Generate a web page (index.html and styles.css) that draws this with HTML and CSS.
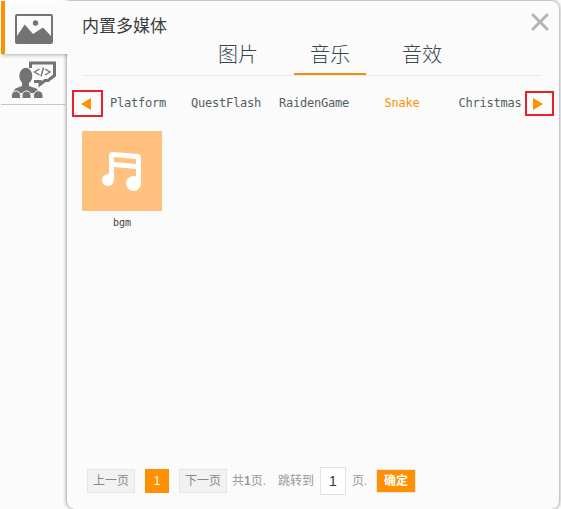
FILE: index.html
```html
<!DOCTYPE html>
<html lang="zh-CN">
<head>
<meta charset="utf-8">
<title>内置多媒体</title>
<link rel="stylesheet" href="styles.css">
</head>
<body>
<div class="app">
  <nav class="sidebar">
    <div class="side-item active">
      <svg width="38" height="30" viewBox="0 0 38 30"><rect x="1" y="1" width="36" height="28" rx="1" fill="none" stroke="#737373" stroke-width="2"/><circle cx="20.5" cy="9" r="2.7" fill="#737373"/><path d="M2 22L9.7 10.5L18 20L28 13.5L36 22V28H2Z" fill="#737373"/></svg>
    </div>
    <div class="side-item second">
      <svg width="46" height="38" viewBox="0 0 46 38" fill="#737373"><path d="M19.5 7V2H43.500V14.500L37 19.500H34L29 23.500V20.500H23" fill="none" stroke="#737373" stroke-width="3"/><ellipse cx="14.800" cy="15" rx="6.500" ry="8.200"/><path d="M11 21H18V25L25.500 27.500L29 32H1L4.500 27.500L11 25Z"/><path d="M.5 37.500V34.500A4.500 4.500 0 0 1 9.500 34.500V37.500ZM11 37.500V34.500A4.500 4.500 0 0 1 20 34.500V37.500ZM22.500 37.500V34.500A4.500 4.500 0 0 1 32 34.500V37.500Z" stroke="#fbfbfb" stroke-width="1"/><path d="M28.500 8L23.500 11L28.500 14M32.500 6.500L30 15.500M34 8L39 11L34 14" fill="none" stroke="#737373" stroke-width="1.400"/></svg>
    </div>
  </nav>
  <main class="panel">
    <header class="header">
      <h1 class="title">内置多媒体</h1>
      <svg class="close" width="18" height="18" viewBox="0 0 18 18"><path d="M2 2L16 16M16 2L2 16" stroke="#b3b5b5" stroke-width="3" stroke-linecap="round"/></svg>
    </header>
    <div class="tabs"><span class="tab">图片</span><span class="tab selected">音乐</span><span class="tab">音效</span></div>
    <div class="categories">
      <span class="arrow prev"><svg width="10" height="12" viewBox="0 0 10 12"><path d="M0 6L10 0V12Z" fill="#ff9100"/></svg></span>
      <span class="cat">Platform</span><span class="cat">QuestFlash</span><span class="cat">RaidenGame</span><span class="cat current">Snake</span><span class="cat">Christmas</span>
      <span class="arrow next"><svg width="10" height="12" viewBox="0 0 10 12"><path d="M10 6L0 0V12Z" fill="#ff9100"/></svg></span>
    </div>
    <section class="media">
      <div class="card">
        <div class="thumb"><svg width="40" height="40" viewBox="0 0 40 40"><path d="M7 29V4.500Q7 1 10.500 1L35.500 3Q39 3.500 39 7V33H34V18L12 16V29Z" fill="#fff"/><path d="M12 6L34 8V13L12 11Z" fill="#ffc17d"/><circle cx="6" cy="29" r="6" fill="#fff"/><circle cx="31.500" cy="32.500" r="7.500" fill="#fff"/></svg></div>
        <div class="name">bgm</div>
      </div>
    </section>
    <footer class="pager">
      <span class="page-btn">上一页</span><span class="page-now">1</span><span class="page-btn">下一页</span>
      <span class="total">共<b>1</b>页.</span><span class="jump">跳转到</span><span class="page-input">1</span><span class="unit">页.</span><span class="confirm">确定</span>
    </footer>
  </main>
</div>
</body>
</html>
```
FILE: styles.css
```css
* { box-sizing: border-box; }
body { margin: 0; background: #fff; font-family: "Liberation Sans", "Noto Sans CJK SC", sans-serif; }
svg { display: block; flex: none; }
.app { display: flex; width: 561px; height: 509px; padding-top: 1px; overflow: hidden; }
.sidebar { width: 67px; background: #fbfbfb; padding-left: 1px; flex: none; }
.side-item { display: flex; }
.active { position: relative; z-index: 2; width: 67px; height: 53px; border-left: 4px solid #ff9100; background: #fbfbfb; padding: 13px 0 0 10px; box-shadow: 0 1px 4px rgba(0,0,0,.3); clip-path: inset(0 0 -8px 0); }
.second { width: 64px; height: 51px; border-bottom: 1px solid #c6c6c6; padding: 7px 0 0 10px; }
.panel { width: 492px; height: 508px; background: #fbfbfb; border-radius: 0 8px 8px 8px; box-shadow: 0 0 4px rgba(0,0,0,.55); display: flex; flex-direction: column; flex: none; }
.header { display: flex; justify-content: space-between; height: 38px; padding: 12px 10px 0 15px; }
.title { margin: -1px 0 0; font: 400 17px/26px "Noto Sans CJK SC", sans-serif; color: #3c3c3c; }
.tabs { display: flex; justify-content: center; gap: 20px; height: 37px; margin: 0 17px 0 15px; padding-left: 36px; border-bottom: 1px solid #e7e9ea; }
.tab { width: 72px; height: 36px; text-align: center; font: 300 20px/29px "Noto Sans CJK SC", sans-serif; color: #37474a; }
.selected { border-bottom: 2px solid #f58b08; }
.categories { display: flex; align-items: center; height: 27px; margin-top: 14px; padding-left: 5px; }
.cat { width: 88px; flex: none; text-align: center; font: 12px/27px "DejaVu Sans Mono", monospace; letter-spacing: -.22px; color: #555e60; }
.current { color: #ff9100; }
.arrow { display: flex; flex: none; align-items: center; border: 2px solid #e8202c; }
.prev { width: 31px; height: 27px; margin-right: -9px; padding-left: 7px; }
.next { width: 29px; height: 25px; margin-left: -9px; padding-left: 6px; }
.media { flex: 1; padding: 14px 15px; }
.card { width: 80px; }
.thumb { display: flex; align-items: center; justify-content: center; height: 80px; background: #ffc17d; }
.name { text-align: center; font: 10px/24px "DejaVu Sans Mono", monospace; color: #444; }
.pager { display: flex; align-items: center; height: 28px; margin: 0 0 14px 20px; font-size: 12px; line-height: 22px; color: #999; white-space: nowrap; }
.page-btn { width: 48px; height: 24px; border: 1px solid #e5e5e5; background: #f2f2f2; text-align: center; color: #888; }
.page-now { width: 24px; height: 24px; line-height: 24px; margin: 0 10px; background: #ff9100; color: #fff; text-align: center; }
.total { width: 40px; margin-left: 5px; }
.jump { width: 36px; margin-left: 6px; }
.page-input { width: 26px; height: 28px; margin-left: 6px; border: 1px solid #e2e2e2; background: #fff; font-size: 14px; line-height: 27px; text-align: center; color: #333; }
.unit { width: 18px; margin-left: 6px; }
.confirm { width: 40px; height: 24px; margin-left: 6px; border: 1px solid #e8e8e8; background: #ff9100; color: #fff; font-weight: 700; text-align: center; }
```
